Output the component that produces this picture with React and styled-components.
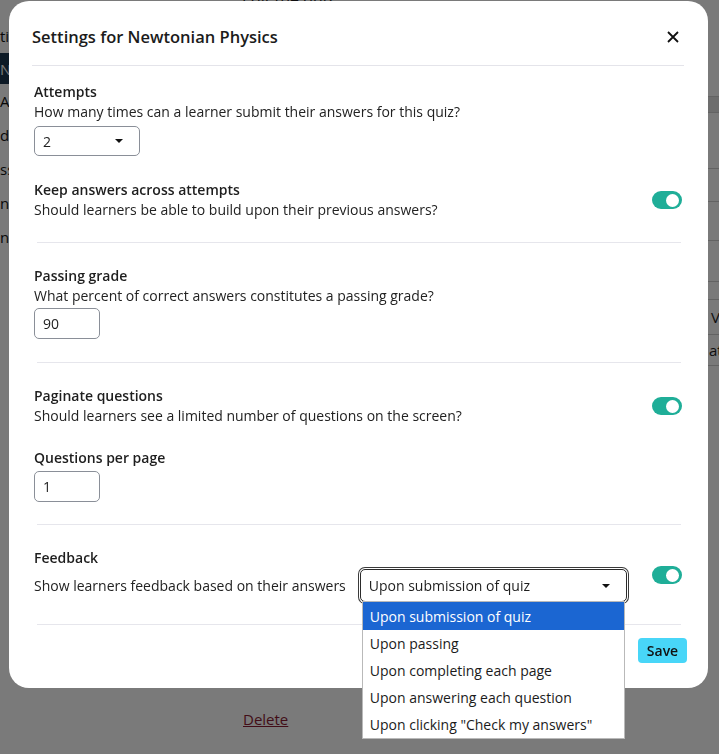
import styled, { createGlobalStyle } from "styled-components";

const GlobalStyle = createGlobalStyle`
  html, body {
    margin: 0;
    padding: 0;
    font-family: "Open Sans", "Noto Sans", sans-serif;
    color: #1e1e1e;
  }
`;

// page behind the dialog
const Page = styled.div`
  display: grid;
  grid-template-columns: 230px 1fr;
  height: 754px;
  background: #f4f4f4;
  overflow: hidden;
`;

const Sidebar = styled.nav`
  display: flex;
  flex-direction: column;
  padding-top: 19px;
  background: #ffffff;
`;

const NavItem = styled.div`
  height: ${(p) => (p.active ? 31 : 34)}px;
  display: flex;
  align-items: center;
  font-size: 15px;
  color: ${(p) => (p.active ? "#ffffff" : "#111")};
  background: ${(p) => (p.active ? "#1d3850" : "transparent")};
`;

const Main = styled.main`
  display: flex;
  flex-direction: column;
  background: #ffffff;
`;

const TopTitle = styled.div`
  height: 20px;
  margin-top: -12px;
  padding-left: 12px;
  font-size: 16px;
`;

const TableRow = styled.div`
  height: ${(p) => p.h}px;
  border-bottom: 1px solid #cfcfcf;
  background: ${(p) => (p.shade ? "#e4e4e4" : "#fff")};
  display: flex;
  align-items: center;
  padding-left: ${(p) => p.indent || 0}px;
  font-size: 15px;
  white-space: nowrap;
`;

const Spacer = styled.div`
  flex: 1;
`;

const DeleteLink = styled.a`
  margin: 0 0 25px 13px;
  color: #8a1c34;
  text-decoration: underline;
  font-size: 15px;
`;

const Overlay = styled.div`
  position: fixed;
  inset: 0;
  background: rgba(0, 0, 0, 0.52);
`;

const Dialog = styled.div`
  position: fixed;
  left: 9px;
  top: 1px;
  width: 699px;
  height: 687px;
  background: #fff;
  border-radius: 20px;
  box-sizing: border-box;
  display: flex;
  flex-direction: column;
`;

const Header = styled.div`
  display: flex;
  align-items: center;
  justify-content: space-between;
  height: 65px;
  margin: 0 24px 0 23px;
  border-bottom: 1px solid #e4e4ea;
  box-sizing: border-box;
  padding-top: 7px;
`;

const Title = styled.h2`
  margin: 0;
  font-size: 16.5px;
  font-weight: 600;
  color: #1b1b1b;
`;

const CloseButton = styled.button`
  border: none;
  background: none;
  padding: 0;
  margin-right: 4px;
  width: 14px;
  height: 14px;
  display: flex;
  cursor: pointer;
`;

const Body = styled.div`
  padding: 0 26px 0 25px;
  display: flex;
  flex-direction: column;
`;

const Section = styled.section`
  display: flex;
  flex-direction: column;
  gap: ${(p) => p.gap || 0}px;
  padding: ${(p) => (p.first ? 16 : 23)}px 0 ${(p) => p.pb || 22}px;
  border-bottom: 1px solid #e6e6ec;
  margin: 0 1px 0 3px;
  & > * {
    margin-left: -3px;
    margin-right: -1px;
  }
`;

const Row = styled.div`
  display: flex;
  align-items: center;
  justify-content: space-between;
`;

const Field = styled.div`
  display: flex;
  flex-direction: column;
`;

const Label = styled.div`
  font-size: 14px;
  font-weight: 600;
  line-height: 20px;
`;

const Hint = styled.div`
  font-size: 14px;
  line-height: 20px;
  color: #222;
`;

const SelectBox = styled.div`
  position: relative;
  width: ${(p) => p.w}px;
  height: ${(p) => p.h}px;
  margin-top: ${(p) => p.mt || 0}px;
  box-sizing: border-box;
  border: 1px solid ${(p) => (p.focused ? "#2b2b2b" : "#8a8f98")};
  border-radius: 5px;
  box-shadow: ${(p) =>
    p.focused ? "0 0 0 1px #fff, 0 0 0 2px #3a3a3a" : "none"};
  display: flex;
  align-items: center;
  justify-content: space-between;
  padding: 0 16px 0 8px;
  font-size: 14px;
  background: #fff;
`;

const Caret = styled.span`
  width: 0;
  height: 0;
  border-left: 4px solid transparent;
  border-right: 4px solid transparent;
  border-top: 4px solid #111;
`;

const NumberInput = styled.div`
  width: 66px;
  height: 31px;
  box-sizing: border-box;
  border: 1px solid #8a8f98;
  border-radius: 5px;
  display: flex;
  align-items: center;
  padding-left: 8px;
  font-size: 14px;
  margin-top: ${(p) => p.mt}px;
`;

const Toggle = styled.div`
  width: 30px;
  height: 18px;
  border-radius: 9px;
  background: #1fae98;
  display: flex;
  align-items: center;
  justify-content: flex-end;
  padding-right: 3px;
  box-sizing: border-box;
  flex-shrink: 0;
  &::after {
    content: "";
    width: 13px;
    height: 13px;
    border-radius: 50%;
    background: #fff;
  }
`;

const FeedbackLine = styled.div`
  display: flex;
  align-items: center;
  gap: 14px;
  margin-top: 1px;
`;

const OptionList = styled.ul`
  position: absolute;
  top: 100%;
  left: 1px;
  width: 263px;
  margin: 0;
  padding: 0;
  list-style: none;
  background: #fff;
  border: 1px solid #b9b9b9;
  box-sizing: border-box;
  z-index: 2;
`;

const Option = styled.li`
  height: 27px;
  display: flex;
  align-items: center;
  padding-left: 7px;
  font-size: 14px;
  color: ${(p) => (p.selected ? "#fff" : "#1b1b1b")};
  background: ${(p) => (p.selected ? "#1b66d2" : "#fff")};
  &:first-child {
    height: 28px;
  }
`;

const Footer = styled.div`
  display: flex;
  justify-content: flex-end;
  padding: 13px 21px 0 0;
`;

const SaveButton = styled.button`
  border: none;
  border-radius: 4px;
  background: #48d6f8;
  color: #111;
  font-family: inherit;
  font-size: 14px;
  font-weight: 600;
  width: 49px;
  height: 25px;
  padding: 0;
`;

const feedbackOptions = [
  "Upon submission of quiz",
  "Upon passing",
  "Upon completing each page",
  "Upon answering each question",
  'Upon clicking "Check my answers"',
];

export default function App() {
  return (
    <>
      <GlobalStyle />
      <Page>
        <Sidebar>
          <NavItem>ti</NavItem>
          <NavItem active>Ne</NavItem>
          <NavItem>Ad</NavItem>
          <NavItem>d</NavItem>
          <NavItem>ss</NavItem>
          <NavItem>ng</NavItem>
          <NavItem>ne</NavItem>
        </Sidebar>
        <Main>
          <TopTitle>Edit the quiz</TopTitle>
          <TableRow h={88} />
          <TableRow h={15} shade />
          <TableRow h={55} />
          <TableRow h={32} />
          <TableRow h={38} />
          <TableRow h={40} />
          <TableRow h={17} />
          <TableRow h={34} indent={481}>View</TableRow>
          <TableRow h={30} indent={479}>ate</TableRow>
          <Spacer />
          <DeleteLink>Delete</DeleteLink>
        </Main>
      </Page>
      <Overlay />
      <Dialog>
        <Header>
          <Title>Settings for Newtonian Physics</Title>
          <CloseButton aria-label="Close">
            <svg width="14" height="14" viewBox="0 0 14 14">
              <path d="M2 2L12 12M12 2L2 12" stroke="#111" strokeWidth="1.8" />
            </svg>
          </CloseButton>
        </Header>
        <Body>
          <Section first gap={24}>
            <Field>
              <Label>Attempts</Label>
              <Hint>How many times can a learner submit their answers for this quiz?</Hint>
              <SelectBox w={106} h={30} mt={4}>
                2 <Caret />
              </SelectBox>
            </Field>
            <Row>
              <Field>
                <Label>Keep answers across attempts</Label>
                <Hint>Should learners be able to build upon their previous answers?</Hint>
              </Field>
              <Toggle />
            </Row>
          </Section>
          <Section pb={23}>
            <Field>
              <Label>Passing grade</Label>
              <Hint>What percent of correct answers constitutes a passing grade?</Hint>
              <NumberInput mt={2}>90</NumberInput>
            </Field>
          </Section>
          <Section gap={22}>
            <Row>
              <Field>
                <Label>Paginate questions</Label>
                <Hint>Should learners see a limited number of questions on the screen?</Hint>
              </Field>
              <Toggle />
            </Row>
            <Field>
              <Label>Questions per page</Label>
              <NumberInput mt={3}>1</NumberInput>
            </Field>
          </Section>
          <Section>
            <Row>
              <Field>
                <Label>Feedback</Label>
                <FeedbackLine>
                  <Hint>Show learners feedback based on their answers</Hint>
                  <SelectBox w={267} h={33} focused>
                    Upon submission of quiz <Caret />
                    <OptionList>
                      {feedbackOptions.map((o, i) => (
                        <Option key={o} selected={i === 0}>
                          {o}
                        </Option>
                      ))}
                    </OptionList>
                  </SelectBox>
                </FeedbackLine>
              </Field>
              <Toggle />
            </Row>
          </Section>
        </Body>
        <Footer>
          <SaveButton>Save</SaveButton>
        </Footer>
      </Dialog>
    </>
  );
}
